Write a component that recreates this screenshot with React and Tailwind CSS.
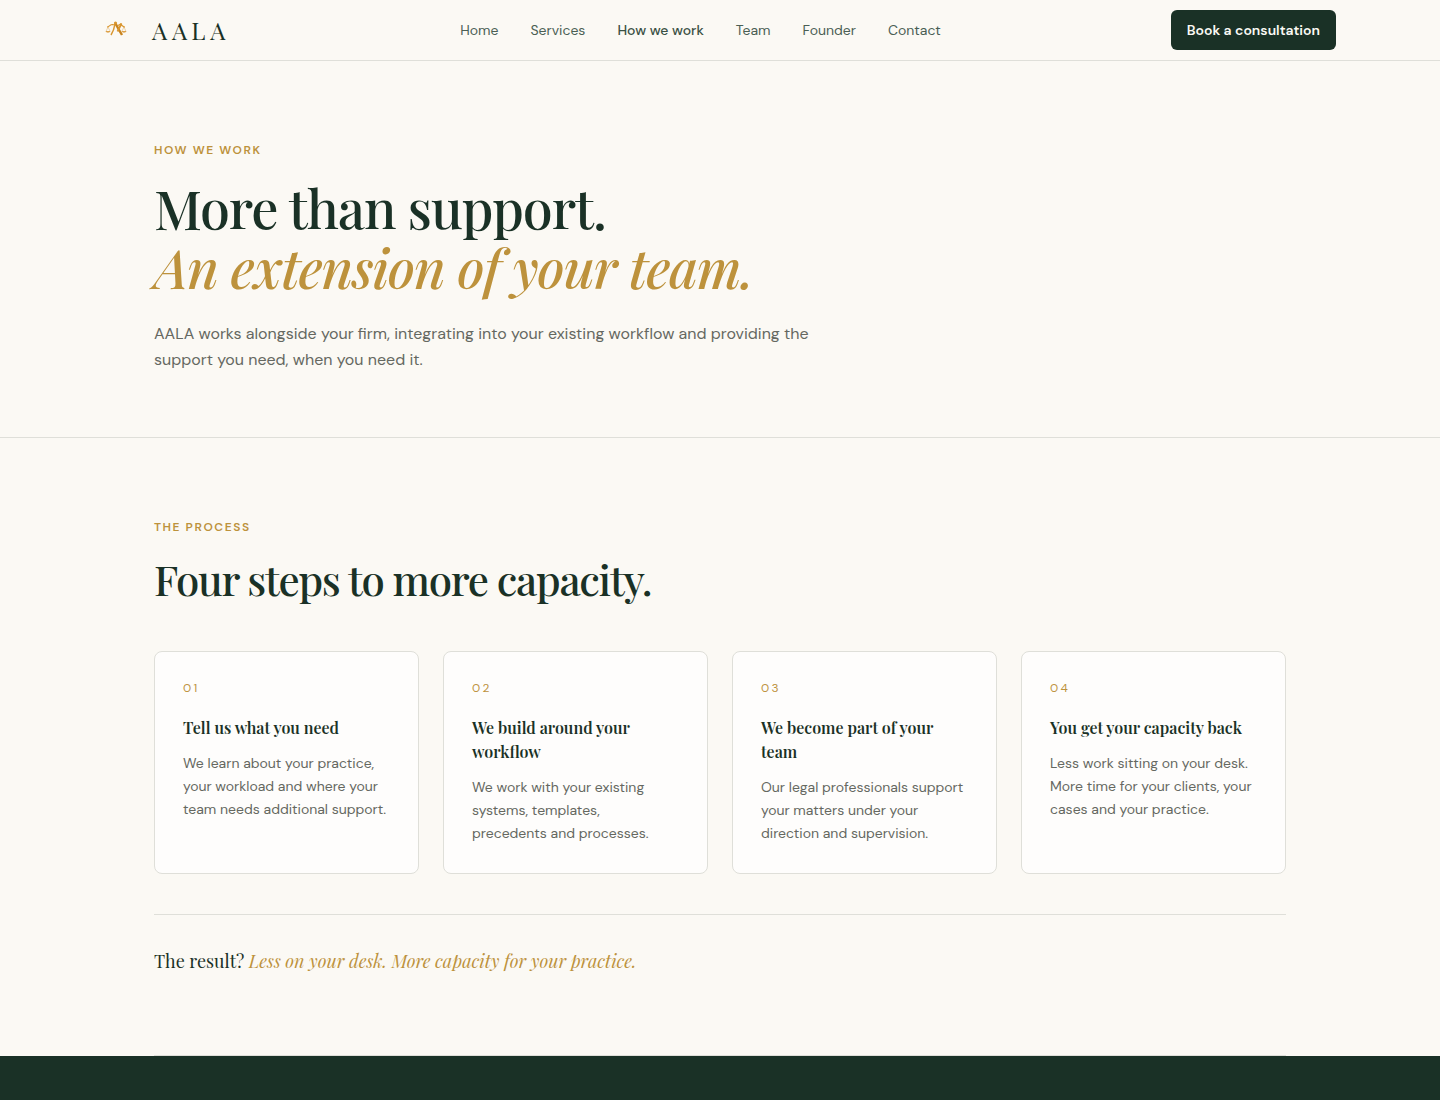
import clsx from "clsx";

const links = ["Home", "Services", "How we work", "Team", "Founder", "Contact"];

const steps = [
  {
    number: "01",
    title: "Tell us what you need",
    text: "We learn about your practice, your workload and where your team needs additional support.",
  },
  {
    number: "02",
    title: "We build around your workflow",
    text: "We work with your existing systems, templates, precedents\u00a0and processes.",
  },
  {
    number: "03",
    title: "We become part of your team",
    text: "Our legal professionals support your matters under your direction and supervision.",
  },
  {
    number: "04",
    title: "You get your capacity back",
    text: "Less work sitting on your desk. More time for your clients, your cases and your practice.",
  },
];

const serif = "font-['Playfair_Display','Liberation_Serif',serif]";
const sans = "font-['DM_Sans','Inter',sans-serif]";

function Logo() {
  return (
    <svg viewBox="0 0 24 24" className="size-6" fill="none" stroke="#d9962f" aria-hidden="true">
      {/* beam */}
      <path d="M3 9C5 9 6 6.5 8.500 6.500L11 7M14 7.500L17.500 5.500M16 7C18 6.500 19 9 21 9" strokeWidth="1.2" />
      {/* legs */}
      <path d="M11 6C10.500 9 9.500 13 7 17" strokeWidth="1.5" />
      <path d="M11.500 5.500L14.500 11L18 17" stroke="#c8841f" strokeWidth="2.4" />
      <path d="M13.500 13.500L17.500 5.500" strokeWidth="1.8" />
      <circle cx="11.500" cy="5" r="1.600" fill="#d9962f" stroke="none" />
      {/* pans */}
      <path d="M4 9L2.200 13M4 9L6 13M20 9L18 13M20 9L21.800 13" strokeWidth="0.4" />
      <path d="M1.500 13H6.500C6 15.300 2 15.300 1.500 13ZM17.500 13H22.500C22 15.300 18 15.300 17.500 13Z" fill="#dda24a" stroke="none" />
    </svg>
  );
}

function Eyebrow({ children }) {
  return (
    <p className="mb-5 text-xs leading-[18px] font-semibold uppercase tracking-[0.13em] text-[#bd923c]">
      {children}
    </p>
  );
}

export default function App() {
  return (
    <div className={clsx("min-h-screen bg-[#fbf9f4] text-[#1a3126]", sans)}>
      {/* Navbar */}
      <header className="border-b border-[#dfdfd9]">
        <div className="mx-auto flex h-[60px] max-w-[1280px] items-center justify-between px-6">
          <a href="#home" className="flex items-center gap-6">
            <Logo />
            <span className={clsx("text-2xl tracking-[0.2em]", serif)}>AALA</span>
          </a>

          <nav className="flex gap-8 text-sm text-[#4b5f54]">
            {links.map((link) => (
              <a
                key={link}
                href="#"
                className={clsx(
                  "hover:text-[#1a3126]",
                  link === "How we work" && "font-medium text-[#3b5145]",
                )}
              >
                {link}
              </a>
            ))}
          </nav>

          <button className="h-10 rounded-md bg-[#1a3126] px-4 text-sm font-semibold text-[#fbf9f4]">
            Book a consultation
          </button>
        </div>
      </header>

      <main>
        {/* Hero */}
        <section className="border-b border-[#dfdfd9]">
          <div className="mx-auto max-w-[1180px] px-6 pt-20 pb-16">
            <Eyebrow>How we work</Eyebrow>
            <h1 className={clsx("mb-6 text-[54px] leading-[59px] font-medium tracking-[-0.02em]", serif)}>
              More than support.
              <em className="block text-[#bd923c]">An extension of your team.</em>
            </h1>
            <p className="max-w-[680px] text-base leading-[26px] text-[#656861]">
              AALA works alongside your firm, integrating into your existing workflow and providing
              the support you need, when you need it.
            </p>
          </div>
        </section>

        {/* Process */}
        <section className="mx-auto max-w-[1180px] px-6 pt-20">
          <Eyebrow>The process</Eyebrow>
          <h2 className={clsx("mb-12 text-[42px] leading-[47px] font-medium tracking-[-0.03em]", serif)}>
            Four steps to more capacity.
          </h2>

          <div className="grid grid-cols-4 gap-6">
            {steps.map((step) => (
              <article
                key={step.number}
                className="rounded-lg border border-[#dfdfd9] bg-[#fefdfc] p-7"
              >
                <p className="mb-5 text-xs tracking-[0.2em] text-[#bd923c]">{step.number}</p>
                <h3 className={clsx("mb-3 text-base font-semibold", serif)}>{step.title}</h3>
                <p className="text-sm leading-[23px] text-[#656861]">{step.text}</p>
              </article>
            ))}
          </div>

          <div className="mt-10 border-y border-[#dfdfd9] pt-8 pb-20">
            <p className={clsx("text-lg", serif)}>
              The result?{" "}
              <em className="text-[#bd923c]">Less on your desk. More capacity for your practice.</em>
            </p>
          </div>
        </section>
      </main>

      <footer className="h-11 bg-[#1a3126]"></footer>
    </div>
  );
}
